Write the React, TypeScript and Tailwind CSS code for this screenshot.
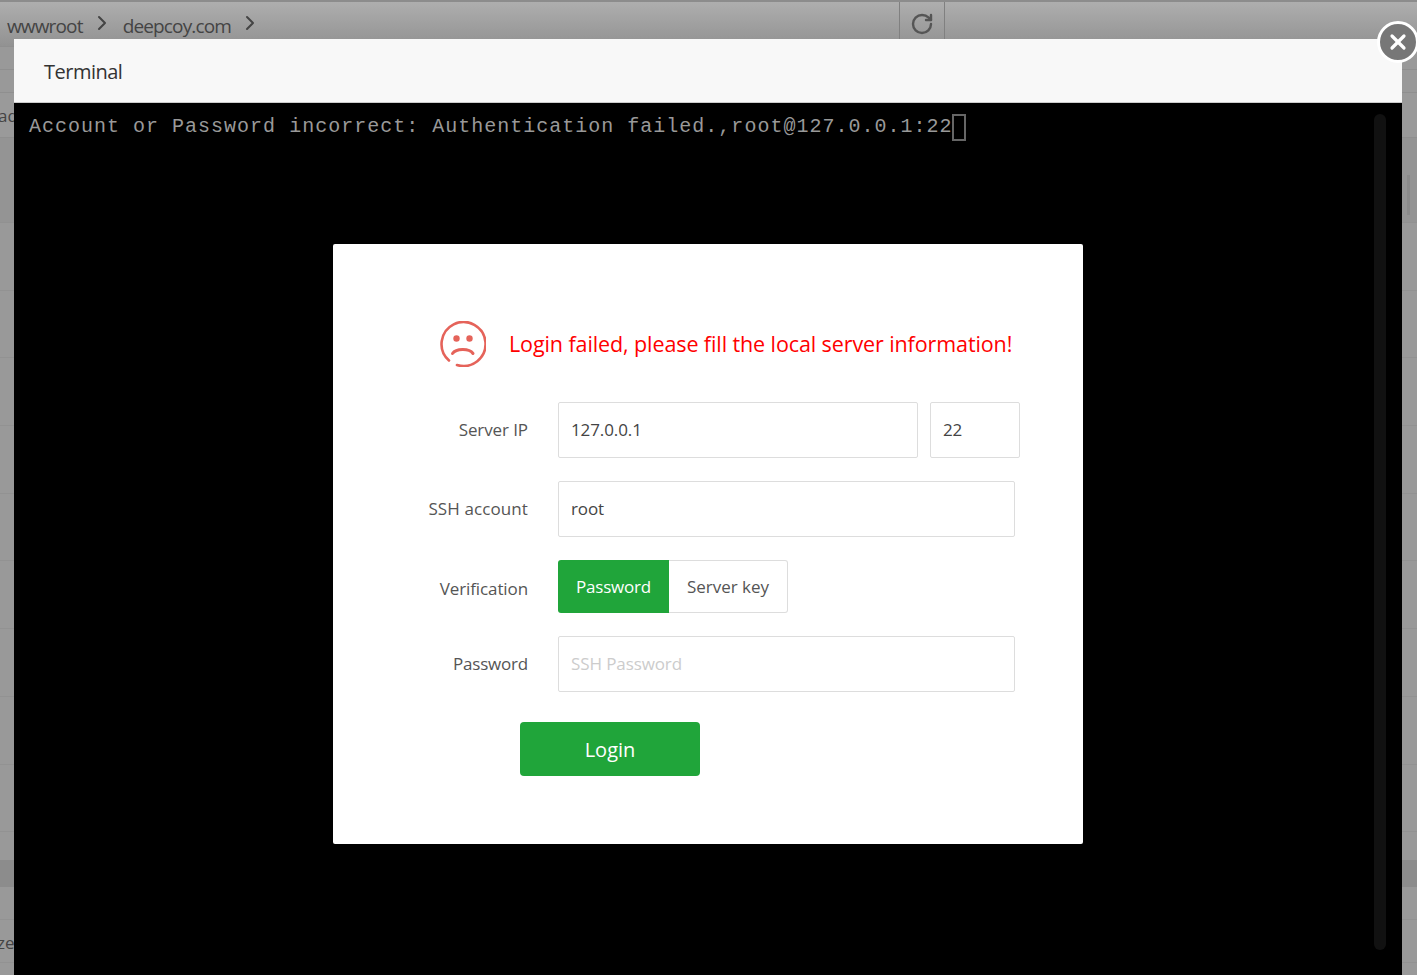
import { ChevronRight, RotateCw, X } from 'lucide-react';

const font = "font-['Open_Sans',sans-serif]";

function SadFace() {
  return (
    <svg width="46" height="46" viewBox="0 0 46 46" fill="none" className="shrink-0">
      <path
        d="M9 39.5A22 22 0 1 1 17 44"
        stroke="#e5635a"
        strokeWidth="2.6"
        strokeLinecap="round"
      />
      <circle cx="16.5" cy="17.5" r="3.2" fill="#e5635a" />
      <circle cx="29.5" cy="17.5" r="3.2" fill="#e5635a" />
      <path d="M12.5 32.5C16 27.5 29 27 33 32.5" stroke="#e5635a" strokeWidth="3" strokeLinecap="round" />
    </svg>
  );
}

function Field({
  label,
  children,
  className,
  labelClass,
}: {
  label: string;
  children: React.ReactNode;
  className?: string;
  labelClass?: string;
}) {
  return (
    <div className={`flex items-center ${className ?? ''}`}>
      <label className={`w-[195px] text-right text-[17px] text-[#555] ${labelClass ?? 'tracking-[-0.1px]'}`}>{label}</label>
      <div className="ml-[30px] flex gap-3">{children}</div>
    </div>
  );
}

function TextInput({ value, placeholder, width }: { value?: string; placeholder?: string; width: string }) {
  return (
    <input
      type="text"
      readOnly
      value={value ?? ''}
      placeholder={placeholder}
      className={`${width} h-[56px] rounded-[2px] border border-[#ddd] bg-white px-3 pb-[2px] text-[17px] tracking-[-0.1px] text-[#444] outline-none placeholder:text-[#ccc]`}
    />
  );
}

function LoginCard() {
  return (
    <div className="h-[600px] w-[750px] rounded-[2px] bg-white pt-[77px]">
      <div className="ml-[107px] flex items-center gap-[23px]">
        <SadFace />
        <span className="whitespace-nowrap text-[21.5px] tracking-[-0.1px] text-[#f00]">
          Login failed, please fill the local server information!
        </span>
      </div>

      <Field label="Server IP" className="mt-[35px]">
        <TextInput value="127.0.0.1" width="w-[360px]" />
        <TextInput value="22" width="w-[90px]" />
      </Field>

      <Field label="SSH account" className="mt-[23px]" labelClass="tracking-[0.1px]">
        <TextInput value="root" width="w-[457px]" />
      </Field>

      <Field label="Verification" className="mt-[23px]" labelClass="pt-1 tracking-[-0.1px]">
        <div className="flex h-[53px] text-[17px]">
          <button className="h-full w-[111px] rounded-l-[3px] bg-[#20a53a] tracking-[-0.2px] text-white">Password</button>
          <button className="h-full w-[119px] rounded-r-[3px] border border-l-0 border-[#ddd] text-[#555]">
            Server key
          </button>
        </div>
      </Field>

      <Field label="Password" className="mt-[23px]" labelClass="tracking-[-0.2px]">
        <TextInput placeholder="SSH Password" width="w-[457px]" />
      </Field>

      <button className="ml-[187px] mt-[30px] h-[54px] w-[180px] rounded-[4px] bg-[#20a53a] pt-[2px] text-[20px] text-white">
        Login
      </button>
    </div>
  );
}

function TerminalDialog() {
  return (
    <div className="absolute bottom-0 left-[14px] right-[15px] top-[39px] flex flex-col">
      <div className="flex h-[64px] shrink-0 items-center border-b border-[#ccc] bg-[#f8f8f8] pl-[30px] pt-[2px] text-[20px] tracking-[-0.5px] text-[#333]">
        Terminal
      </div>
      <div className="relative flex-1 bg-black">
        <div className="flex items-center pl-[15px] pt-[9px] font-['Liberation_Mono',monospace] text-[20px] tracking-[1.005px] text-[#999]">
          <span className="whitespace-pre">Account or Password incorrect: Authentication failed.,root@127.0.0.1:22</span>
          <span className="ml-[-1px] h-[27px] w-[14px] border-2 border-[#666]" />
        </div>
        {/* scrollbar */}
        <div className="absolute bottom-[25px] right-[16px] top-[11px] w-[12px] rounded-full bg-[#111]" />
        <div className="absolute inset-x-0 top-[141px] flex justify-center">
          <LoginCard />
        </div>
      </div>
    </div>
  );
}

function BackgroundPage() {
  const rows = Array.from({ length: 9 });
  return (
    <div className="flex h-full flex-col bg-[#999] text-[#444]">
      <div className="flex h-[46px] shrink-0 border-t-2 border-[#8c8c8c] bg-gradient-to-b from-[#aeaeae] to-[#929292]">
        <div className="flex w-[900px] items-start border-r border-[#808080] pl-[7px] pt-[10px] text-[19px] tracking-[-0.85px]">
          <span>wwwroot</span>
          <ChevronRight size={24} strokeWidth={2} className="ml-[7px] mt-[-1px]" />
          <span className="ml-[9px]">deepcoy.com</span>
          <ChevronRight size={24} strokeWidth={2} className="ml-[7px] mt-[-1px]" />
        </div>
        <div className="flex w-[45px] justify-center border-r border-[#808080] pt-[10px]">
          <RotateCw size={24} strokeWidth={2.4} className="text-[#555]" />
        </div>
      </div>
      <div className="h-[24px] shrink-0 border-b border-[#8f8f8f] border-t" />
      <div className="h-[23px] shrink-0 border-b border-[#8f8f8f]" />
      <div className="flex h-[45px] shrink-0 items-start border-b border-[#8f8f8f] bg-[#9a9a9a] pt-[10px] text-[17px]">
        <span className="ml-[-2px]">ad</span>
      </div>
      <div className="h-[85px] shrink-0 border-b border-[#919191] bg-[#949494]" />
      {rows.map((_, i) => (
        <div key={i} className="h-[67.7px] shrink-0 border-b border-[#929292]" />
      ))}
      <div className="h-[28px] shrink-0" />
      <div className="h-[27px] shrink-0 bg-[#8c8c8c]" />
      <div className="h-[33px] shrink-0 border-b border-[#929292]" />
      <div className="flex h-[43px] shrink-0 items-center border-b border-[#929292] pt-1 text-[17px]">
        <span className="ml-[-3px]">ze:</span>
      </div>
    </div>
  );
}

export default function App() {
  return (
    <div className={`relative h-screen w-full overflow-hidden ${font}`}>
      <BackgroundPage />
      {/* page scrollbar thumb */}
      <div className="absolute right-[7px] top-[175px] h-[40px] w-[3px] bg-[#8a8a8a]" />
      <TerminalDialog />
      <button className="absolute right-[-2px] top-[21px] flex h-[42px] w-[42px] items-center justify-center rounded-full border-[3px] border-white bg-[#777] text-white">
        <X size={24} strokeWidth={3.2} />
      </button>
    </div>
  );
}
